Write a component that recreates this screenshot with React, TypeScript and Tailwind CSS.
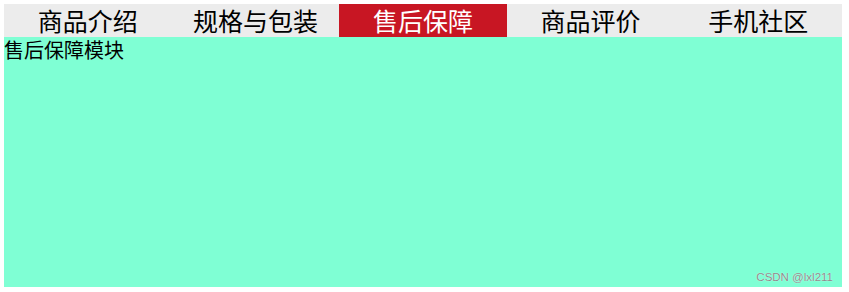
const tabs = ['商品介绍', '规格与包装', '售后保障', '商品评价', '手机社区'];

export default function App() {
  const active = 2;

  return (
    <div
      className="w-[849px] h-[292px] bg-white p-1 pr-[7px] pb-[5px]"
      style={{ fontFamily: '"Noto Sans CJK SC", "Liberation Sans", sans-serif' }}
    >
      <div className="flex flex-col h-full">
        <ul className="flex h-[33px] bg-[#ececec]">
          {tabs.map((t, i) => (
            <li
              key={t}
              className={`flex-1 flex items-center justify-center text-[25px] leading-none ${
                i === active ? 'bg-[#c81623] text-white' : 'text-black'
              }`}
            >
              {t}
            </li>
          ))}
        </ul>
        <div className="relative flex-1 bg-[#7fffd4] text-[20px] leading-[26px] text-black">
          售后保障模块
          <span
            className="absolute right-[9px] bottom-[4px] text-[11.5px] leading-none text-[#8c8c8c]"
            style={{ fontFamily: '"Liberation Sans", sans-serif', textShadow: '0 0 1px #ffffff' }}
          >
            CSDN @lxl211
          </span>
        </div>
      </div>
    </div>
  );
}
